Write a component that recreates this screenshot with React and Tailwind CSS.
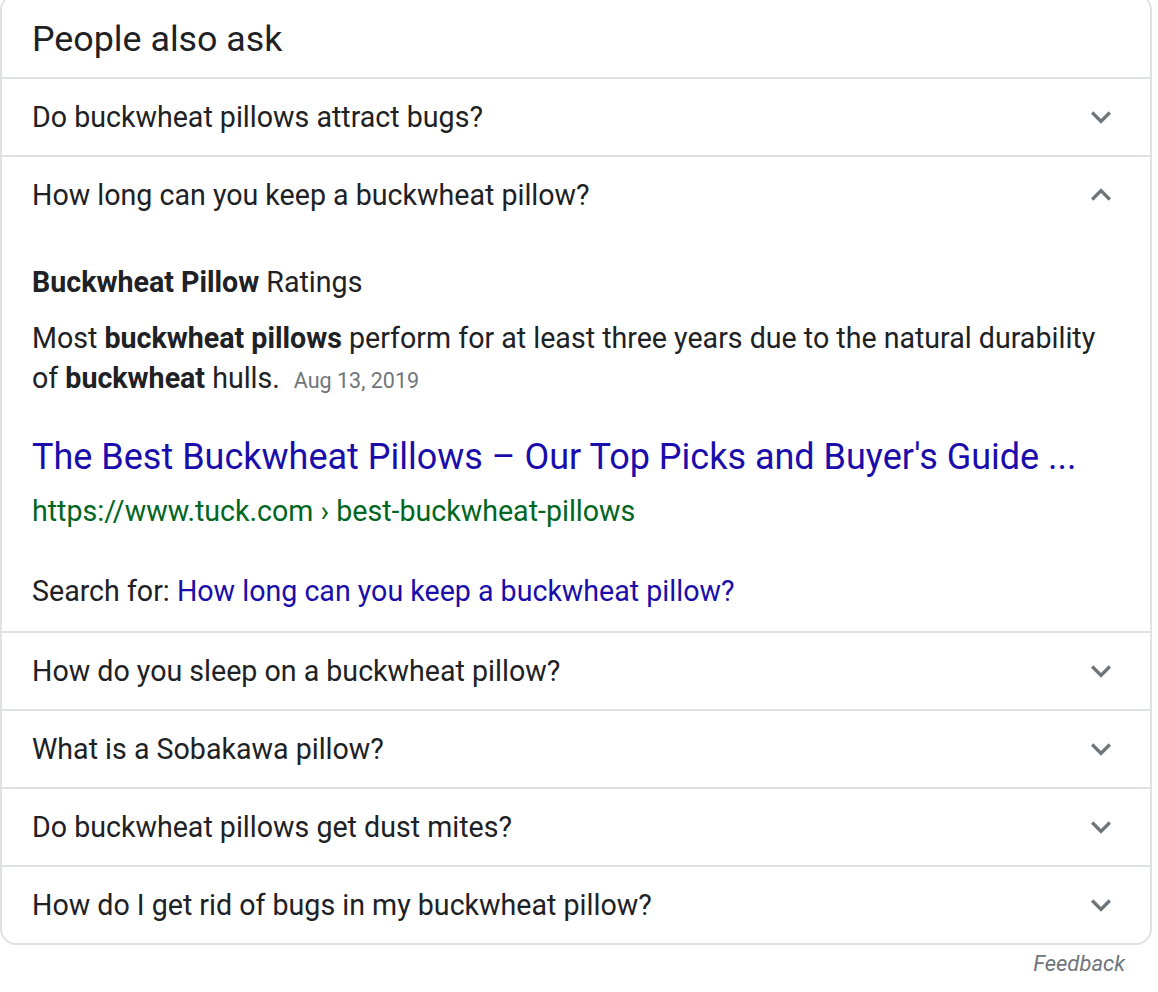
import React from 'react'

const font = { fontFamily: 'Roboto, "Liberation Sans", Arial, sans-serif' }

function Chevron({ up = false }) {
  return (
    <svg viewBox="0 0 24 24" className={up ? 'w-[40px] h-[40px] rotate-180' : 'w-[40px] h-[40px]'} fill="#70757a">
      <path d="M7.41 8.59L12 13.17l4.59-4.58L18 10l-6 6-6-6 1.41-1.41z" />
    </svg>
  )
}

function Question({ text, up = false }) {
  return (
    <div className="h-[76px] flex items-center justify-between pl-[30px] pr-[29px]">
      <span className="text-[28.6px] text-[#202124]">{text}</span>
      <Chevron up={up} />
    </div>
  )
}

const questions = [
  'How do you sleep on a buckwheat pillow?',
  'What is a Sobakawa pillow?',
  'Do buckwheat pillows get dust mites?',
  'How do I get rid of bugs in my buckwheat pillow?',
]

export default function App() {
  return (
    <div className="bg-white min-h-[992px] w-[1158px] overflow-hidden" style={font}>
      <div className="w-[1152px] mt-[-6px] border-2 border-[#dfe1e5] rounded-[16px] bg-white">
        {/* Header */}
        <div className="h-[81px] pt-[6px] flex items-center px-[30px]">
          <h2 className="text-[35.8px] text-[#202124] leading-none">People also ask</h2>
        </div>

        <div className="border-t-2 border-[#dfe1e5]">
          <Question text="Do buckwheat pillows attract bugs?" />
        </div>

        {/* Expanded */}
        <div className="border-t-2 border-[#dfe1e5]">
          <Question text="How long can you keep a buckwheat pillow?" up />
          <div className="pl-[30px] pr-[40px] pt-[29px] pb-[20px]">
            <div className="text-[28.6px] leading-[40px] text-[#202124]">
              <b className="font-bold">Buckwheat Pillow</b> Ratings
            </div>
            <p className="mt-[16px] text-[28.6px] leading-[40px] text-[#202124]">
              Most <b className="font-bold">buckwheat pillows</b> perform for at least three years due to the natural durability of{' '}
              <b className="font-bold">buckwheat</b> hulls.
              <span className="ml-[14px] text-[21.5px] text-[#70757a]">Aug 13, 2019</span>
            </p>
            <div className="mt-[34px] text-[36px] leading-[44px] text-[#1a0dab]">
              The Best Buckwheat Pillows – Our Top Picks and Buyer's Guide ...
            </div>
            <div className="mt-[12px] text-[28.6px] leading-[40px] text-[#006621]">
              https://www.tuck.com › best-buckwheat-pillows
            </div>
            <div className="mt-[40px] text-[28.6px] leading-[40px] text-[#202124]">
              Search for: <span className="text-[#1a0dab]">How long can you keep a buckwheat pillow?</span>
            </div>
          </div>
        </div>

        {questions.map((q) => (
          <div key={q} className="border-t-2 border-[#dfe1e5]">
            <Question text={q} />
          </div>
        ))}
      </div>
      <div className="w-[1152px] flex justify-end pr-[27px] pt-[2px]">
        <span className="text-[22px] italic text-[#70757a]">Feedback</span>
      </div>
    </div>
  )
}
